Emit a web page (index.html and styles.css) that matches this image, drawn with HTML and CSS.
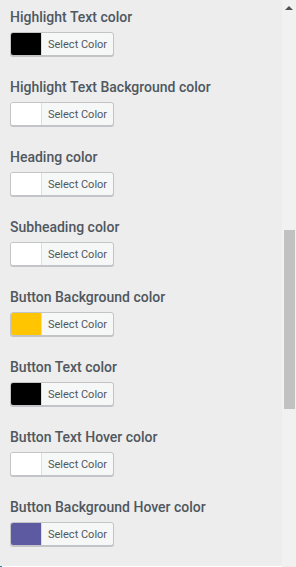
FILE: index.html
```html
<!DOCTYPE html>
<html lang="en">
<head>
  <meta charset="UTF-8" />
  <meta name="viewport" content="width=device-width, initial-scale=1.0"/>
  <title>Colors</title>
  <link rel="stylesheet" href="styles.css">
</head>
<body>
<div class="frame">
  <div class="panel">
    <div class="field">
      <label>Highlight Text color</label>
      <button class="picker"><span class="swatch black"></span>Select Color</button>
    </div>
    <div class="field">
      <label>Highlight Text Background color</label>
      <button class="picker"><span class="swatch"></span>Select Color</button>
    </div>
    <div class="field">
      <label>Heading color</label>
      <button class="picker"><span class="swatch"></span>Select Color</button>
    </div>
    <div class="field">
      <label>Subheading color</label>
      <button class="picker"><span class="swatch"></span>Select Color</button>
    </div>
    <div class="field">
      <label>Button Background color</label>
      <button class="picker"><span class="swatch yellow"></span>Select Color</button>
    </div>
    <div class="field">
      <label>Button Text color</label>
      <button class="picker"><span class="swatch black"></span>Select Color</button>
    </div>
    <div class="field">
      <label>Button Text Hover color</label>
      <button class="picker"><span class="swatch"></span>Select Color</button>
    </div>
    <div class="field">
      <label>Button Background Hover color</label>
      <button class="picker"><span class="swatch purple"></span>Select Color</button>
    </div>
  </div>
  <div class="scrollbar">
    <span class="arrow"></span>
    <span class="thumb"></span>
  </div>
</div>
<div class="footer"><span class="dot"></span></div>
</body>
</html>
```

FILE: styles.css
```css
:root {
  --bg: #ededed;
  --label: #50575e;
  --track: #f1f1f1;
}
html, body {
  margin: 0;
  padding: 0;
}
body {
  font-family: Roboto, 'Noto Sans', sans-serif;
  background: var(--bg);
  overflow: hidden;
}
.frame {
  display: flex;
  height: 566px;
}
.panel {
  flex: 1;
}
.field {
  height: 70px;
  box-sizing: border-box;
  padding: 8px 10px 0;
}
label {
  display: block;
  font-size: 14px;
  font-weight: 500;
  line-height: 18px;
  color: var(--label);
  margin-bottom: 6px;
  white-space: nowrap;
}
.picker {
  display: flex;
  align-items: center;
  height: 24px;
  width: 104px;
  padding: 0;
  border: 1px solid #c3c4c7;
  border-radius: 3px;
  background: #f6f7f7;
  box-shadow: 0 1px 0 #c3c4c7;
  color: #50575e;
  font-family: inherit;
  font-size: 11px;
  overflow: hidden;
}
.swatch {
  width: 30px;
  height: 100%;
  background: #fff;
  border-right: 1px solid #dcdcde;
  margin-right: 6px;
}
.swatch.black { background: #000; }
.swatch.yellow { background: #ffc500; }
.swatch.purple { background: #5e5aa2; }
.scrollbar {
  width: 14px;
  background: var(--track);
  display: flex;
  flex-direction: column;
  align-items: center;
}
.arrow {
  margin-top: 6px;
  width: 0;
  height: 0;
  border-left: 4px solid transparent;
  border-right: 4px solid transparent;
  border-bottom: 4px solid #505050;
}
.thumb {
  margin-top: 220px;
  width: 11px;
  height: 179px;
  background: #c1c1c1;
}
.footer {
  height: 1px;
  width: 282px;
  background: #fff;
}
.dot {
  display: block;
  width: 2px;
  height: 1px;
  background: #1a7fc0;
}
```
